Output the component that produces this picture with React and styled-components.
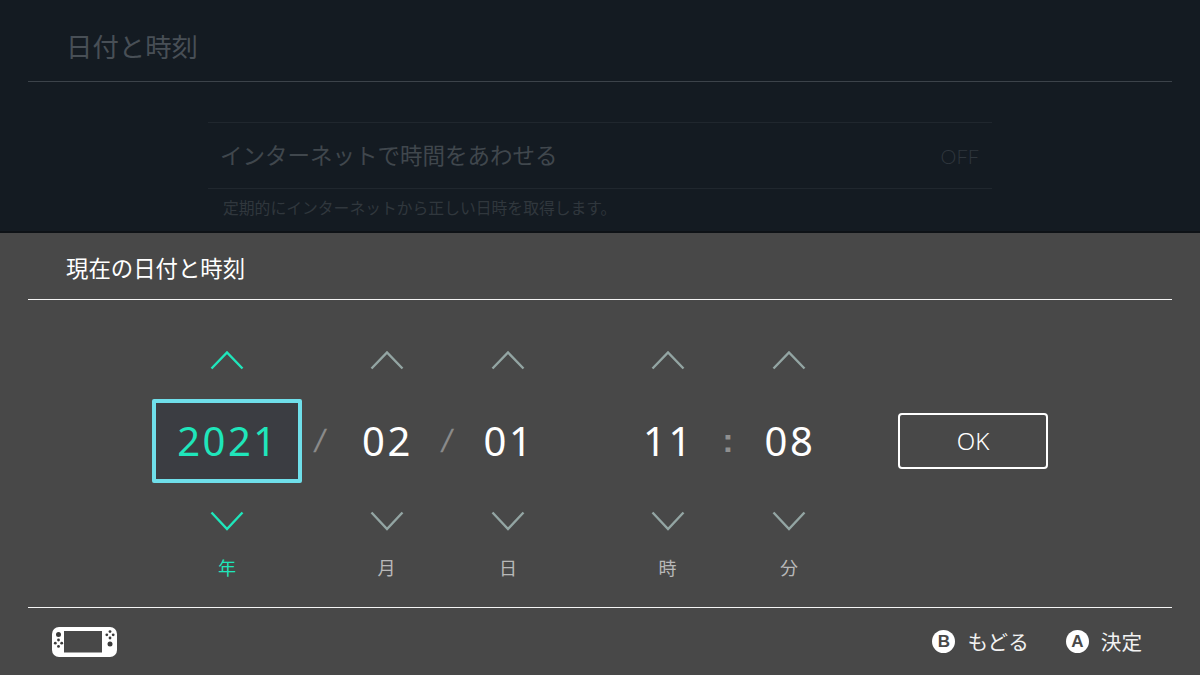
import React from 'react';
import styled, { createGlobalStyle } from 'styled-components';

const JP = '"Noto Sans CJK JP", "Noto Sans", sans-serif';

const GlobalStyle = createGlobalStyle`
  html, body {
    margin: 0;
    padding: 0;
    background: #141b22;
    overflow: hidden;
  }
  * {
    box-sizing: border-box;
  }
`;

const Page = styled.div`
  width: 1200px;
  height: 675px;
  display: flex;
  flex-direction: column;
  font-family: ${JP};
`;

const Backdrop = styled.div`
  height: 231px;
  padding: 0 28px;
  overflow: hidden;
`;

const PageHeader = styled.div`
  height: 82px;
  border-bottom: 1px solid #3c434a;
  padding: 12px 0 0 38px;
  display: flex;
  align-items: center;
  color: #484f56;
  font-size: 26.4px;
  line-height: 1;
`;

const SettingRow = styled.div`
  margin: 40px 0 0 180px;
  width: 784px;
  height: 67px;
  border-top: 1px solid #20272e;
  border-bottom: 1px solid #20272e;
  padding: 0 13px 3px 12px;
  display: flex;
  align-items: center;
  justify-content: space-between;
  color: #40474d;
  font-size: 22.5px;
  line-height: 1;
`;

const OffLabel = styled.span`
  font-family: Lato, sans-serif;
  font-weight: 300;
  font-size: 20px;
  margin-top: 3px;
  color: #2f363d;
`;

const SettingNote = styled.div`
  margin: 9px 0 0 195px;
  color: #30373d;
  font-size: 15.8px;
  line-height: 20px;
`;

const Panel = styled.div`
  flex: 1;
  background: #484848;
  border-top: 2px solid #0e1216;
  padding: 0 28px;
  display: flex;
  flex-direction: column;
`;

const PanelHeader = styled.div`
  height: 67px;
  border-bottom: 1px solid #f4f4f4;
  padding: 3px 0 0 38px;
  display: flex;
  align-items: center;
  color: #fff;
  font-size: 22.4px;
  line-height: 1;
`;

const PickerRow = styled.div`
  height: 308px;
  padding: 50px 0 0 124px;
  display: flex;
  align-items: flex-start;
  border-bottom: 1px solid #f4f4f4;
`;

const Column = styled.div`
  width: ${p => p.$width}px;
  margin-left: ${p => p.$gap || 0}px;
  display: flex;
  flex-direction: column;
  align-items: center;
`;

const Chevron = styled.svg`
  display: block;
  width: 34px;
  height: 20px;
  fill: none;
  stroke: ${p => (p.$active ? '#1fe6bb' : '#93a5a3')};
  stroke-width: 2.4;
`;

const ValueBox = styled.div`
  width: 100%;
  height: 84px;
  margin: 29px 0 28px;
  padding-left: 2px;
  display: flex;
  align-items: center;
  justify-content: center;
  font-family: "Noto Sans", sans-serif;
  font-weight: 400;
  font-size: 40px;
  letter-spacing: 2.5px;
  line-height: 1;
  color: ${p => (p.$active ? '#1fe6bb' : '#fff')};
  background: ${p => (p.$active ? '#3b3d42' : 'transparent')};
  border: ${p => (p.$active ? '4px solid #6fdfea' : 'none')};
  border-radius: ${p => (p.$active ? '2px' : '0')};
`;

const UnitLabel = styled.div`
  margin-top: 24px;
  height: 24px;
  line-height: 24px;
  font-size: 18px;
  color: ${p => (p.$active ? '#1fe6bb' : '#b8b8b8')};
`;

const Slash = styled.div`
  width: ${p => p.$width}px;
  height: 84px;
  margin-top: 49px;
  display: flex;
  align-items: center;
  justify-content: center;
  font-family: "Liberation Sans", sans-serif;
  font-size: 32px;
  line-height: 1;
  color: #8a8a8a;
  transform: skewX(-12deg);
`;

const Colon = styled.div`
  width: ${p => p.$width}px;
  height: 84px;
  margin-top: 49px;
  padding-bottom: 3px;
  display: flex;
  align-items: center;
  justify-content: center;
  font-family: "Liberation Sans", sans-serif;
  font-weight: 700;
  font-size: 34px;
  line-height: 1;
  color: #8f8f8f;
`;

const OkButton = styled.button`
  width: 150px;
  height: 56px;
  margin: 63px 0 0 59px;
  padding: 0;
  background: transparent;
  border: 2px solid #fff;
  border-radius: 4px;
  color: #fff;
  font-family: "Noto Sans", sans-serif;
  font-weight: 300;
  font-size: 24px;
  line-height: 1;
`;

const Footer = styled.div`
  flex: 1;
  padding: 0 30px 0 24px;
  display: flex;
  align-items: center;
  justify-content: space-between;
`;

const HintGroup = styled.div`
  display: flex;
  gap: 37px;
`;

const Hint = styled.div`
  display: flex;
  align-items: center;
  gap: 12px;
  color: #f2f2f2;
  font-size: 20.6px;
  line-height: 1;
`;

const ButtonGlyph = styled.span`
  width: 23px;
  height: 23px;
  border-radius: 50%;
  background: #fff;
  color: #484848;
  display: flex;
  align-items: center;
  justify-content: center;
  font-family: "Liberation Sans", sans-serif;
  font-weight: 700;
  font-size: 17px;
`;

const ConsoleSvg = styled.svg`
  display: block;
  width: 65px;
  height: 30px;
`;

const ChevronUp = ({ active }) => (
  <Chevron $active={active} viewBox="0 0 34 20">
    <path d="M1.5 18.5 17 2.5 32.5 18.5" />
  </Chevron>
);

const ChevronDown = ({ active }) => (
  <Chevron $active={active} viewBox="0 0 34 20">
    <path d="M1.5 1.5 17 18 32.5 1.5" />
  </Chevron>
);

const ConsoleIcon = () => (
  <ConsoleSvg viewBox="0 0 65 30">
    <rect x="0" y="0" width="65" height="30" rx="7" fill="#fff" />
    <rect x="12" y="4" width="38" height="21.5" fill="#484848" />
    <g fill="#3a3a3a">
      <circle cx="6.5" cy="7.5" r="2.5" />
      <circle cx="58" cy="17" r="2.5" />
      <circle cx="6.5" cy="13" r="1.4" />
      <circle cx="6.5" cy="19.4" r="1.4" />
      <circle cx="3.3" cy="16.2" r="1.4" />
      <circle cx="9.7" cy="16.2" r="1.4" />
      <circle cx="58" cy="4.6" r="1.4" />
      <circle cx="58" cy="11" r="1.4" />
      <circle cx="54.8" cy="7.8" r="1.4" />
      <circle cx="61.2" cy="7.8" r="1.4" />
    </g>
  </ConsoleSvg>
);

const Field = ({ width, gap, value, unit, active }) => (
  <Column $width={width} $gap={gap}>
    <ChevronUp active={active} />
    <ValueBox $active={active}>{value}</ValueBox>
    <ChevronDown active={active} />
    <UnitLabel $active={active}>{unit}</UnitLabel>
  </Column>
);

export default function App() {
  return (
    <Page lang="ja">
      <GlobalStyle />
      <Backdrop>
        <PageHeader>日付と時刻</PageHeader>
        <SettingRow>
          <span>インターネットで時間をあわせる</span>
          <OffLabel>OFF</OffLabel>
        </SettingRow>
        <SettingNote>定期的にインターネットから正しい日時を取得します。</SettingNote>
      </Backdrop>
      <Panel>
        <PanelHeader>現在の日付と時刻</PanelHeader>
        <PickerRow>
          <Field width={150} value="2021" unit="年" active />
          <Slash $width={36}>/</Slash>
          <Field width={97} value="02" unit="月" />
          <Slash $width={24}>/</Slash>
          <Field width={98} value="01" unit="日" />
          <Field width={99} gap={61} value="11" unit="時" />
          <Colon $width={22}>:</Colon>
          <Field width={100} value="08" unit="分" />
          <OkButton>OK</OkButton>
        </PickerRow>
        <Footer>
          <ConsoleIcon />
          <HintGroup>
            <Hint>
              <ButtonGlyph>B</ButtonGlyph>
              もどる
            </Hint>
            <Hint>
              <ButtonGlyph>A</ButtonGlyph>
              決定
            </Hint>
          </HintGroup>
        </Footer>
      </Panel>
    </Page>
  );
}
